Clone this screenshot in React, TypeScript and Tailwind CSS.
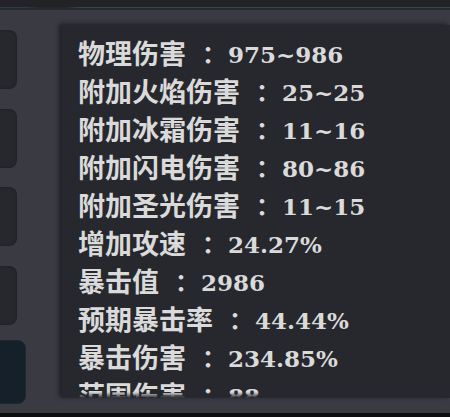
import React from "react";

const stats: { label: string; value: string }[] = [
  { label: "物理伤害", value: "975~986" },
  { label: "附加火焰伤害", value: "25~25" },
  { label: "附加冰霜伤害", value: "11~16" },
  { label: "附加闪电伤害", value: "80~86" },
  { label: "附加圣光伤害", value: "11~15" },
  { label: "增加攻速", value: "24.27%" },
  { label: "暴击值", value: "2986" },
  { label: "预期暴击率", value: "44.44%" },
  { label: "暴击伤害", value: "234.85%" },
  { label: "范围伤害", value: "88" },
];

const font = { fontFamily: '"DejaVu Serif", "Noto Sans CJK SC", serif' };
const colonFont = { fontFamily: '"Noto Sans CJK JP", sans-serif' };

const App = () => {
  return (
    <div className="w-[450px] h-[417px] flex flex-col bg-[#393a42] overflow-hidden" style={font}>
      {/* top strip */}
      <div className="h-[10px] shrink-0 bg-[#222227] flex flex-col">
        <div className="h-[7px]" />
        <div className="h-[1px] bg-[linear-gradient(to_right,#2c3f40_0px,#2c3f40_25px,#24272b_40px,#24272b_65px,#2f4a4a_80px,#2f4a4a_100%)]" />
        <div className="h-[2px] bg-[#28292e]" />
      </div>

      <div className="flex-1 flex min-h-0">
        {/* side tabs */}
        <div className="w-[62px] shrink-0 flex flex-col pt-[20px]">
          <div className="-ml-[13px] w-[30px] h-[59px] rounded-[8px] bg-[#27282d] shadow-[inset_0_0_3px_rgba(0,0,0,0.35)]" />
          <div className="-ml-[13px] mt-[19.5px] w-[30px] h-[59px] rounded-[8px] bg-[#27282d] shadow-[inset_0_0_3px_rgba(0,0,0,0.35)]" />
          <div className="-ml-[13px] mt-[19.5px] w-[30px] h-[59px] rounded-[8px] bg-[#27282d] shadow-[inset_0_0_3px_rgba(0,0,0,0.35)]" />
          <div className="-ml-[13px] mt-[19.5px] w-[30px] h-[59px] rounded-[8px] bg-[#27282d] shadow-[inset_0_0_3px_rgba(0,0,0,0.35)]" />
          <div className="-ml-[13px] mt-[15px] w-[39px] h-[64px] rounded-[8px] bg-[#15202a] border border-[#1c2933]" />
        </div>

        {/* stats panel */}
        <div className="flex-1 mt-[15px] mb-[15px] bg-[#27282d] shadow-[-3px_-1px_4px_rgba(0,0,0,0.45)] overflow-hidden relative">
          <div className="pl-[16px] pt-[10px] flex flex-col text-[#dadada] font-bold">
            {stats.map((s) => (
              <div key={s.label} className="h-[38px] flex items-center whitespace-nowrap leading-none">
                <span className="text-[27px]">{s.label}</span>
                <span className="inline-block w-[24px] ml-[10px] mr-[8px] text-center text-[24px]" style={colonFont}>
                  ：
                </span>
                <span className="text-[23px]">{s.value}</span>
              </div>
            ))}
          </div>
          <div className="absolute left-0 right-0 bottom-0 h-[6px] bg-gradient-to-b from-transparent to-[#27282d]" />
        </div>
      </div>

      <div className="h-[4px] shrink-0 bg-[#0e0e10]" />
    </div>
  );
};

export default App;
